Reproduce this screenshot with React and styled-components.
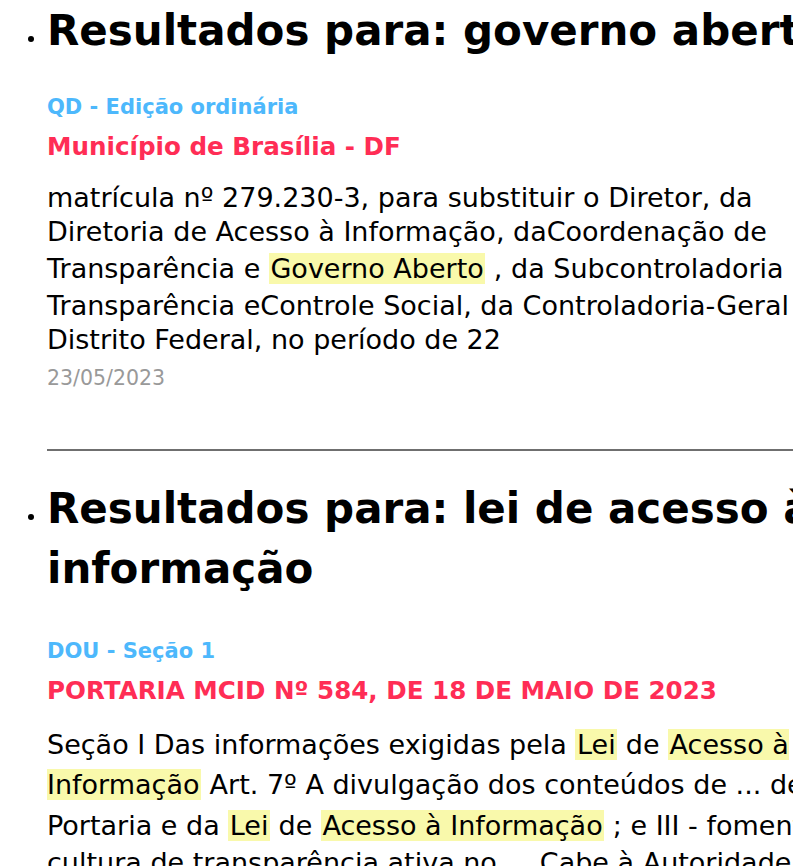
import styled, { createGlobalStyle } from 'styled-components';

const GlobalStyle = createGlobalStyle`
  html, body {
    margin: 0;
    padding: 0;
    background: #ffffff;
    overflow: hidden;
  }
  body {
    font-family: 'DejaVu Sans', 'Noto Sans', sans-serif;
    color: #000000;
  }
`;

const ResultList = styled.ul`
  margin: 0;
  padding: 1px 0 0 47px;
  list-style: disc outside;
  font-size: 21px;
`;

const ResultGroup = styled.li`
  width: 820px;
`;

const Heading = styled.h2`
  margin: 0;
  font-size: 42px;
  line-height: 60px;
  font-weight: bold;
`;

const Entry = styled.div`
  padding-top: ${({ $top }) => $top}px;
`;

const Source = styled.div`
  color: #4db8fc;
  font-size: 21px;
  font-weight: bold;
  line-height: 28px;
`;

const Title = styled.div`
  color: #ff2d55;
  font-size: 24.6px;
  font-weight: bold;
  line-height: 32px;
  margin-top: 10px;
`;

const Excerpt = styled.p`
  margin: 18px 0 0;
  font-size: 27px;
  line-height: 33.75px;
`;

const Mark = styled.mark`
  background: #f9f9ab;
  color: inherit;
  padding: 0 1.5px;
  line-height: 40.5px;
`;

const DateLine = styled.div`
  margin-top: 7px;
  color: #999999;
  font-size: 20.5px;
  line-height: 28px;
`;

const Divider = styled.hr`
  width: 100%;
  margin: 57px 0 28px;
  border: 0;
  border-top: 2px solid #6f6f6f;
`;

export default function App() {
  return (
    <>
      <GlobalStyle />
      <ResultList>
        <ResultGroup>
          <Heading>Resultados para: governo aberto</Heading>
          <Entry $top={32}>
            <Source>QD - Edição ordinária</Source>
            <Title>Município de Brasília - DF</Title>
            <Excerpt>
              matrícula nº 279.230-3, para substituir o Diretor, da Diretoria de Acesso à Informação,
              daCoordenação de Transparência e <Mark>Governo Aberto</Mark> , da Subcontroladoria de
              Transparência eControle Social, da Controladoria-Geral do Distrito Federal, no período de 22
            </Excerpt>
            <DateLine>23/05/2023</DateLine>
          </Entry>
          <Divider />
        </ResultGroup>
        <ResultGroup>
          <Heading>Resultados para: lei de acesso à informação</Heading>
          <Entry $top={38}>
            <Source>DOU - Seção 1</Source>
            <Title>PORTARIA MCID Nº 584, DE 18 DE MAIO DE 2023</Title>
            <Excerpt>
              Seção I Das informações exigidas pela <Mark>Lei</Mark> de <Mark>Acesso à Informação</Mark>{' '}
              Art. 7º A divulgação dos conteúdos de ... desta Portaria e da <Mark>Lei</Mark> de{' '}
              <Mark>Acesso à Informação</Mark> ; e III - fomentar a cultura de transparência ativa no ...
              Cabe à Autoridade de Monitoramento da <Mark>Lei</Mark> de <Mark>Acesso à Informação</Mark>
            </Excerpt>
          </Entry>
        </ResultGroup>
      </ResultList>
    </>
  );
}
